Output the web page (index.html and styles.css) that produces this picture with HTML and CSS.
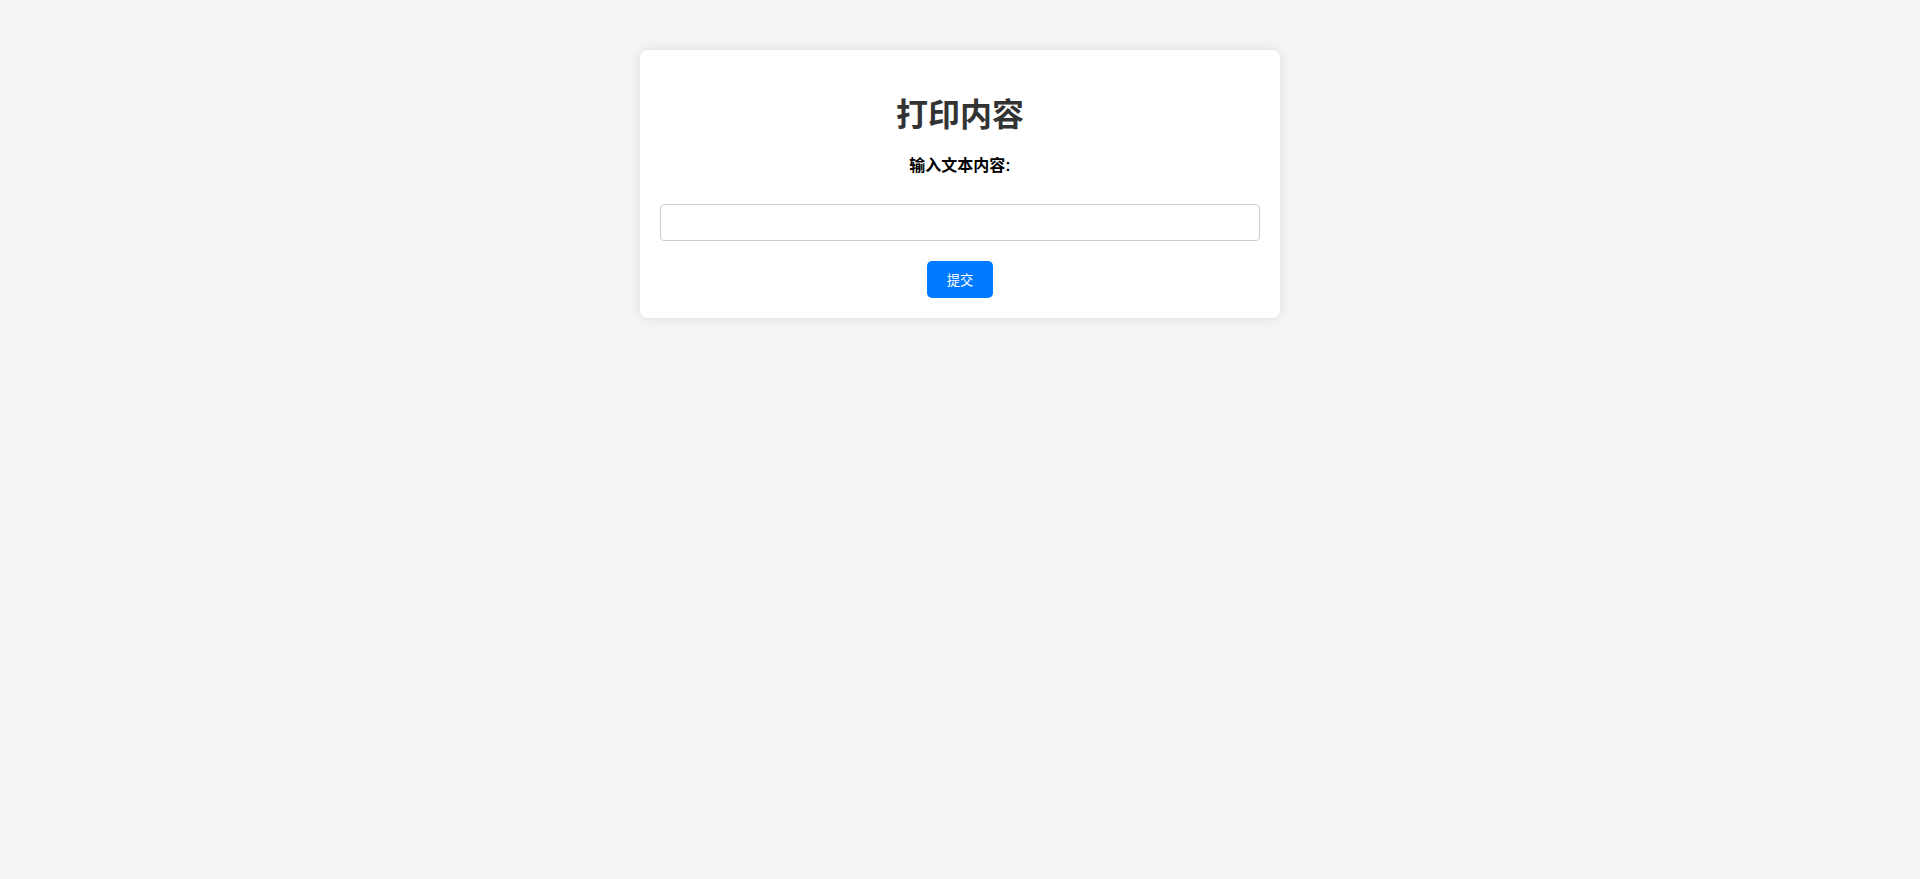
FILE: index.html
```html
<!DOCTYPE html>
<html lang="zh-CN">
<head>
    <meta charset="UTF-8">
    <meta name="viewport" content="width=device-width, initial-scale=1.0">
    <title>打印内容</title>
    <link rel="stylesheet" href="styles.css">
</head>
<body>
    <div class="container">
        <h1>打印内容</h1>
        <form class="print-form" onsubmit="return false;">
            <label for="content">输入文本内容:</label>
            <input type="text" id="content" name="content">
            <button type="submit">提交</button>
        </form>
    </div>
</body>
</html>
```

FILE: styles.css
```css
body {
    font-family: 'Liberation Sans', 'Noto Sans CJK SC', sans-serif;
    background: #f4f4f4;
    margin: 0;
}

.container {
    max-width: 600px;
    margin: 50px auto;
    padding: 20px;
    background: #fff;
    border-radius: 8px;
    box-shadow: 0 0 10px rgba(0, 0, 0, 0.1);
    text-align: center;
}

h1 {
    font-size: 32px;
    line-height: 38px;
    color: #333;
    margin: 26px 0 22px;
}

.print-form {
    display: flex;
    flex-direction: column;
    align-items: center;
}

label {
    font-size: 16px;
    line-height: 20px;
    font-weight: bold;
    color: #000;
    margin-bottom: 28px;
}

input {
    box-sizing: border-box;
    width: 100%;
    height: 37px;
    padding: 10px;
    font-size: 13.333px;
    border: 1px solid #ccc;
    border-radius: 4px;
    margin: 0 0 20px;
}

button {
    box-sizing: border-box;
    height: 37px;
    padding: 0 20px;
    font-family: 'Liberation Sans', 'Noto Sans CJK SC', sans-serif;
    font-size: 13.333px;
    background: #007bff;
    color: #fff;
    border: none;
    border-radius: 5px;
    cursor: pointer;
}

button:hover {
    background: #0069d9;
}
```
